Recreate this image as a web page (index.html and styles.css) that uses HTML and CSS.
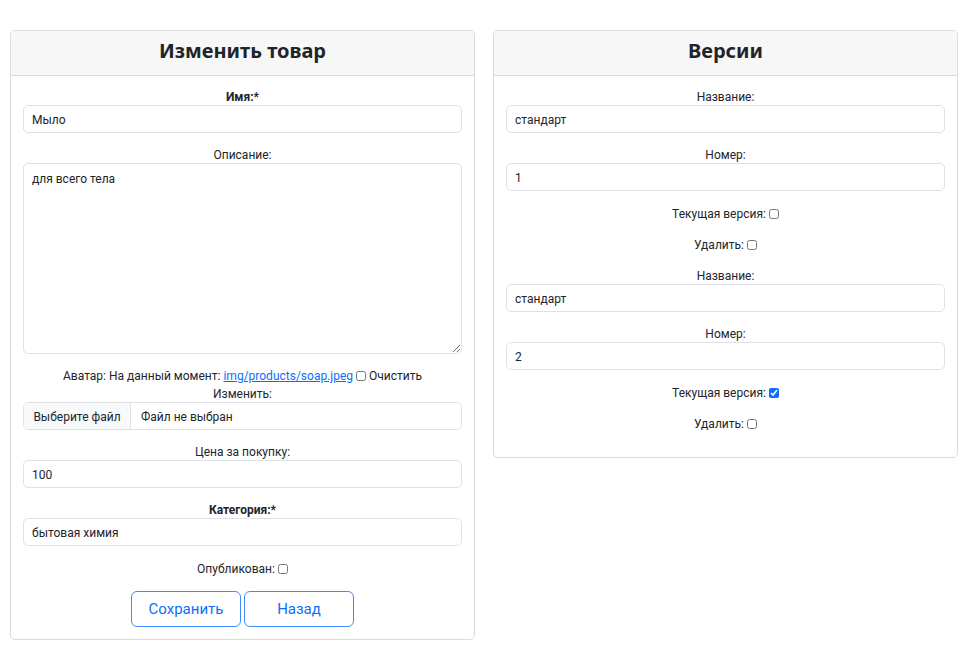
FILE: index.html
```html
<!DOCTYPE html>
<html lang="ru">
<head>
<meta charset="utf-8">
<title>Изменить товар</title>
<link rel="stylesheet" href="styles.css">
</head>
<body>
<div class="page">
  <section class="card">
    <header class="card-header"><h2>Изменить товар</h2></header>
    <form class="card-body">
      <div class="field">
        <label class="req">Имя:*</label>
        <div class="input">Мыло</div>
      </div>
      <div class="field field-text">
        <label>Описание:</label>
        <textarea class="textarea">для всего тела</textarea>
      </div>
      <div class="field field-file">
        <div class="line">Аватар: На данный момент: <a href="#">img/products/soap.jpeg</a> <input type="checkbox" class="cb"> Очистить</div>
        <div class="line">Изменить:</div>
        <div class="file">
          <span class="file-btn">Выберите файл</span>
          <span class="file-name">Файл не выбран</span>
        </div>
      </div>
      <div class="field">
        <label>Цена за покупку:</label>
        <div class="input">100</div>
      </div>
      <div class="field">
        <label class="req">Категория:*</label>
        <div class="input">бытовая химия</div>
      </div>
      <div class="field check">Опубликован: <input type="checkbox" class="cb"></div>
      <div class="buttons">
        <button type="button" class="btn">Сохранить</button>
        <button type="button" class="btn">Назад</button>
      </div>
    </form>
  </section>

  <section class="card">
    <header class="card-header"><h2>Версии</h2></header>
    <div class="card-body">
      <div class="version">
        <div class="field">
          <label>Название:</label>
          <div class="input">стандарт</div>
        </div>
        <div class="field">
          <label>Номер:</label>
          <div class="input">1</div>
        </div>
        <div class="field check check-gap">Текущая версия: <input type="checkbox" class="cb"></div>
        <div class="field check">Удалить: <input type="checkbox" class="cb"></div>
      </div>
      <div class="version">
        <div class="field">
          <label>Название:</label>
          <div class="input">стандарт</div>
        </div>
        <div class="field">
          <label>Номер:</label>
          <div class="input">2</div>
        </div>
        <div class="field check check-gap">Текущая версия: <input type="checkbox" class="cb" checked></div>
        <div class="field check">Удалить: <input type="checkbox" class="cb"></div>
      </div>
    </div>
  </section>
</div>
</body>
</html>
```

FILE: styles.css
```css
* { box-sizing: border-box; }

body {
  margin: 0;
  background: #fff;
  color: #212529;
  font-family: Roboto, "Noto Sans", sans-serif;
  font-size: 12px;
}

.page {
  display: grid;
  grid-template-columns: 465px 465px;
  column-gap: 18px;
  align-items: start;
  padding: 30px 0 0 10px;
}

.card {
  border: 1px solid #dadbdc;
  border-radius: 5px;
  background: #fff;
  overflow: hidden;
}

.card-header {
  height: 45px;
  padding-bottom: 5px;
  background: #f7f7f7;
  border-bottom: 1px solid #dadbdc;
  display: flex;
  align-items: center;
  justify-content: center;
}

.card-header h2 {
  margin: 0;
  font-family: "Noto Sans", sans-serif;
  font-size: 20px;
  font-weight: 700;
  color: #212529;
}

.card-body {
  display: flex;
  flex-direction: column;
  padding: 13px 12px 12px;
  margin: 0;
}

.field {
  display: flex;
  flex-direction: column;
  margin-bottom: 14px;
}

.field label {
  display: block;
  text-align: center;
  line-height: 15px;
  padding-top: 1px;
}

.field label.req { font-weight: 700; }

.input {
  height: 28px;
  border: 1px solid #dee2e6;
  border-radius: 5px;
  padding: 1px 8px 0;
  display: flex;
  align-items: center;
  font-size: 12px;
}

.field-text { margin-bottom: 12px; }

.textarea {
  height: 191px;
  border: 1px solid #dee2e6;
  border-radius: 5px;
  padding: 8px 8px 6px;
  font-family: inherit;
  font-size: 12px;
  color: #212529;
  resize: vertical;
  outline: none;
}

.line {
  text-align: center;
  line-height: 18px;
  padding-top: 1px;
  height: 18px;
}

.line a { color: #0d6efd; text-decoration: underline; }

.file {
  height: 28px;
  border: 1px solid #dee2e6;
  border-radius: 5px;
  display: flex;
  align-items: stretch;
  overflow: hidden;
}

.file-btn {
  width: 107px;
  padding-top: 1px;
  background: #f8f9fa;
  border-right: 1px solid #dee2e6;
  display: flex;
  align-items: center;
  justify-content: center;
}

.file-name {
  display: flex;
  align-items: center;
  padding: 1px 0 0 10px;
}

.check {
  flex-direction: row;
  justify-content: center;
  align-items: center;
  height: 16px;
  padding-top: 1px;
  gap: 3px;
}

.check-gap { margin-bottom: 15px; }

.version:first-child .field:last-child { margin-bottom: 16px; }

.cb {
  width: 10px;
  height: 10px;
  margin: 0;
  accent-color: #0d6efd;
}

.line .cb { vertical-align: -1px; }

.buttons {
  display: flex;
  justify-content: center;
  gap: 3px;
  margin-top: 1px;
}

.btn {
  width: 110px;
  height: 36px;
  border: 1px solid #3d8bfd;
  border-radius: 6px;
  background: #fff;
  color: #0d6efd;
  font-family: inherit;
  font-size: 15px;
  cursor: pointer;
}
```
